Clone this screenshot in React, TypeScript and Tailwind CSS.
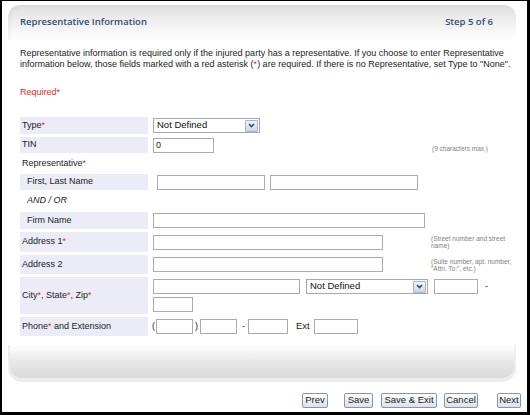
import React from "react";

const Req = () => <span className="text-[#e0282e]">*</span>;

const Field = ({ className = "", value = "" }: { className?: string; value?: string }) => (
  <input
    readOnly
    value={value}
    className={`h-[15px] border border-[#ababab] bg-white px-[2px] text-[9px] text-[#222] outline-none ${className}`}
  />
);

const Select = ({ className = "" }: { className?: string }) => (
  <div className={`flex h-[15px] items-center justify-between border border-[#a3a9b4] bg-white pl-[3px] pr-[1px] ${className}`}>
    <span className="text-[9.5px] text-[#111]">Not Defined</span>
    <span className="flex h-[12px] w-[13px] items-center justify-center rounded-[1px] border border-[#a9b5cf] bg-gradient-to-b from-[#f1f4fb] to-[#cdd6e8]">
      <svg width="7" height="5" viewBox="0 0 7 5">
        <path d="M1 1l2.5 2.5L6 1" stroke="#3f475a" strokeWidth="1.6" fill="none" />
      </svg>
    </span>
  </div>
);

const Row = ({
  label,
  h,
  indent = false,
  bg = true,
  children,
}: {
  label: React.ReactNode;
  h: string;
  indent?: boolean;
  bg?: boolean;
  children?: React.ReactNode;
}) => (
  <div className={`flex ${h}`}>
    <div
      className={`flex w-[128px] shrink-0 items-center ${bg ? "bg-[#ececf8]" : ""} ${indent ? "pl-[7px]" : "pl-[2px]"}`}
    >
      {label}
    </div>
    <div className="ml-[3px] flex flex-1 items-center">{children}</div>
  </div>
);

const Hint = ({ children, className = "" }: { children: React.ReactNode; className?: string }) => (
  <div className={`text-[6.5px] leading-[7px] text-[#808080] ${className}`}>{children}</div>
);

const Button = ({ label, className = "" }: { label: string; className?: string }) => (
  <button
    className={`flex h-[15px] items-center justify-center rounded-[2px] border border-[#8795b4] bg-gradient-to-b from-white to-[#dde1e8] text-[9.5px] text-[#1a1a1a] ${className}`}
  >
    {label}
  </button>
);

export default function App() {
  return (
    <div className="box-border h-[415px] w-[530px] border-t-[1px] border-l-[2px] border-r-[3px] border-b-[3px] border-black bg-white font-['Liberation_Sans',Arial,sans-serif] text-[9px] text-[#222]">
      {/* header */}
      <div className="ml-[6px] mt-[4px] flex h-[35px] w-[508px] items-center justify-between rounded-t-[12px] bg-gradient-to-b from-[#e1e1e1] to-white pl-[12px] pr-[23px] shadow-[inset_3px_2px_4px_rgba(0,0,0,0.04)]">
        <span className="font-['Open_Sans',sans-serif] text-[9.5px] font-semibold text-[#2f4d78]">
          Representative Information
        </span>
        <span className="font-['Open_Sans',sans-serif] text-[9.5px] font-semibold text-[#2f4d78]">Step 5 of 6</span>
      </div>

      <p className="ml-[18px] mt-[8px] w-[496px] leading-[10.5px]">
        Representative information is required only if the injured party has a representative. If you choose to enter
        Representative information below, those fields marked with a red asterisk (<Req />) are required. If there is
        no Representative, set Type to "None".
      </p>

      <div className="ml-[18px] mt-[18px] leading-[10px] text-[#e0282e]">Required*</div>

      <div className="ml-[18px] mt-[20px] flex flex-col gap-[3px]">
        <Row label={<span>Type<Req /></span>} h="h-[17px]">
          <Select className="ml-[2px] w-[107px]" />
        </Row>
        <Row label="TIN" h="h-[16px]">
          <Field className="ml-[2px] w-[61px]" value="0" />
          <Hint className="mb-[1px] ml-[218px] self-end">(9 characters max.)</Hint>
        </Row>
        <Row label={<span>Representative<Req /></span>} h="h-[15px]" bg={false} />
        <Row label="First, Last Name" h="h-[16px]" indent>
          <Field className="ml-[6px] w-[108px]" />
          <Field className="ml-[5px] w-[148px]" />
        </Row>
        <Row label={<span className="italic">AND / OR</span>} h="h-[16px]" indent bg={false} />
        <Row label="Firm Name" h="h-[17px]" indent>
          <Field className="ml-[2px] w-[272px]" />
        </Row>
        <Row label={<span>Address 1<Req /></span>} h="h-[20px]">
          <Field className="ml-[2px] w-[230px]" />
          <Hint className="ml-[48px]">
            (Street number and street
            <br />
            name)
          </Hint>
        </Row>
        <Row label="Address 2" h="h-[19px]">
          <Field className="ml-[2px] w-[230px]" />
          <Hint className="ml-[48px]">
            (Suite number, apt. number,
            <br />
            "Attn. To:", etc.)
          </Hint>
        </Row>
        <Row
          label={
            <span>
              City<Req />, State<Req />, Zip<Req />
            </span>
          }
          h="h-[37px]"
        >
          <div className="flex h-full flex-col pl-[2px] pt-[2px]">
            <div className="flex items-center">
              <Field className="w-[147px]" />
              <Select className="ml-[6px] w-[122px]" />
              <Field className="ml-[6px] w-[44px]" />
              <span className="ml-[7px]">-</span>
            </div>
            <Field className="mt-[3px] w-[40px]" />
          </div>
        </Row>
        <Row label={<span>Phone<Req /> and Extension</span>} h="h-[19px]">
          <span className="ml-[1px]">(</span>
          <Field className="ml-[1px] w-[37px]" />
          <span className="ml-[2px]">)</span>
          <Field className="ml-[2px] w-[37px]" />
          <span className="ml-[5px]">-</span>
          <Field className="ml-[3px] w-[40px]" />
          <span className="ml-[8px] text-[9.5px]">Ext</span>
          <Field className="ml-[4px] w-[44px]" />
        </Row>
      </div>

      {/* footer bar */}
      <div className="ml-[6px] mt-[9px] w-[508px] rounded-b-[14px] bg-[#ededed] px-[2px] pb-[4px]">
        <div className="h-[33px] rounded-b-[12px] bg-gradient-to-b from-white via-[#e8e8e8] to-[#dadada]" />
      </div>

      <div className="mr-[6px] mt-[11px] flex justify-end">
        <Button label="Prev" className="w-[26px]" />
        <Button label="Save" className="ml-[16px] w-[29px]" />
        <Button label="Save & Exit" className="ml-[8px] w-[56px]" />
        <Button label="Cancel" className="ml-[7px] w-[34px]" />
        <Button label="Next" className="ml-[19px] w-[24px]" />
      </div>
    </div>
  );
}
